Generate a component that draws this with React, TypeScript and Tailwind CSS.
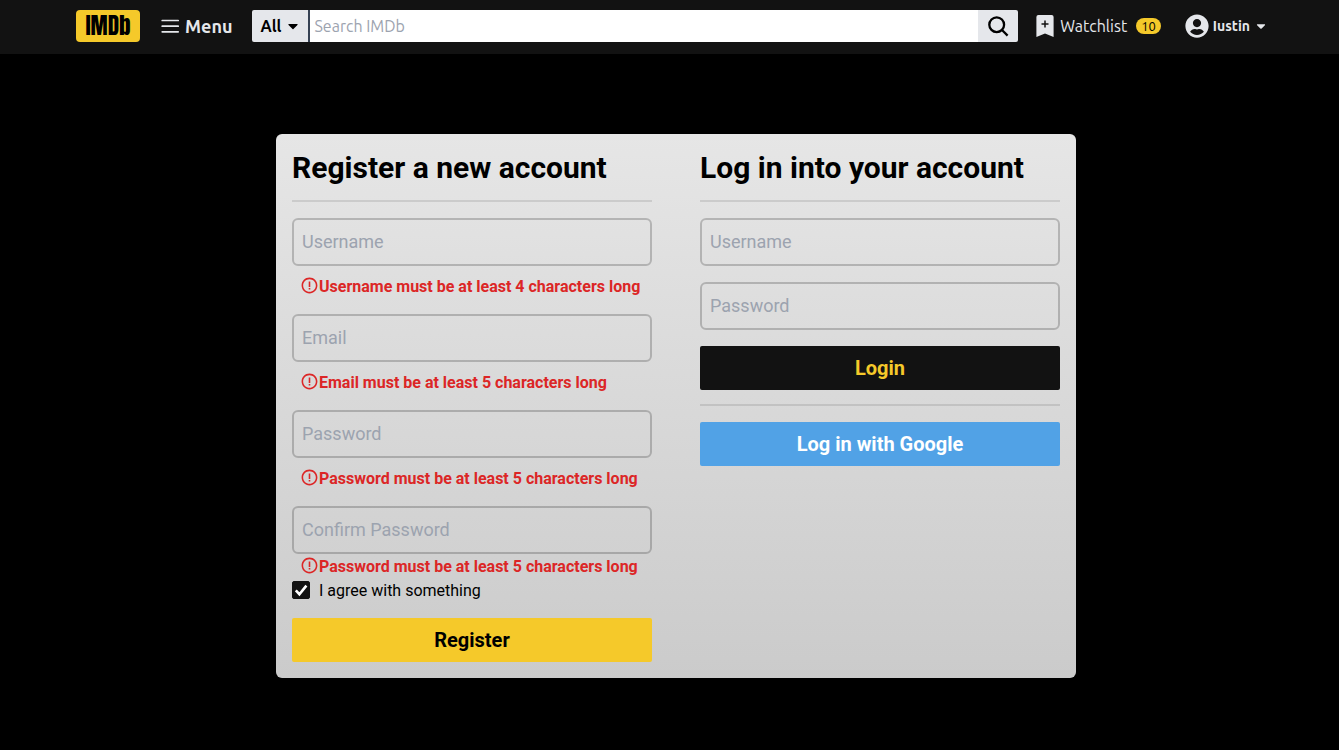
import { useState } from "react";
import { FaCaretDown, FaUserCircle } from "react-icons/fa";
import { BiErrorCircle } from "react-icons/bi";

function MenuIcon() {
  return (
    <svg viewBox="0 0 20 20" className="h-5 w-5" fill="none" stroke="currentColor" strokeWidth="1.7" strokeLinecap="round" aria-hidden="true">
      <path d="M2.2 4.5h16M2.2 10.2h16M2.2 15.8h16" />
    </svg>
  );
}

function SearchIcon() {
  return (
    <svg viewBox="0 0 24 24" className="h-6 w-6" fill="none" stroke="currentColor" strokeWidth="2.3" aria-hidden="true">
      <circle cx="10.7" cy="10.7" r="7.4" />
      <path d="M16 16l5.6 5.6" />
    </svg>
  );
}

function WatchlistIcon() {
  return (
    <svg viewBox="0 0 18 22" className="h-[22px] w-[18px]" aria-hidden="true">
      <path d="M2.4 0h13.2a2 2 0 0 1 2 2v20L9 18.6.4 22V2a2 2 0 0 1 2-2z" fill="currentColor" />
      <path d="M9 5.6v7M5.5 9.1h7" stroke="#121212" strokeWidth="1.5" fill="none" />
    </svg>
  );
}

function Navbar() {
  return (
    <header className="bg-[#121212] font-['Ubuntu','Noto_Sans',sans-serif] text-gray-200">
      <nav className="mx-auto flex h-[54px] max-w-[1199px] items-center pt-[10px] pb-3 pr-px pl-[6px]">
        <a href="#home" aria-label="IMDb home" className="flex h-8 w-16 shrink-0 items-center justify-center rounded bg-[#f5c92a] font-['Impact','Anton','Roboto_Condensed','Open_Sans_Condensed','Ubuntu_Condensed',sans-serif] text-[23px] font-normal text-black">
          IMDb
        </a>
        <button type="button" className="ml-5 flex shrink-0 items-center gap-[5px] text-lg font-bold">
          <MenuIcon />
          Menu
        </button>
        <form className="ml-5 flex h-8 min-w-0 grow overflow-hidden rounded-xs" onSubmit={(e) => e.preventDefault()}>
          <button type="button" className="flex w-[58px] shrink-0 items-center gap-1 border-r-2 border-gray-700 bg-gray-200 pl-2 font-bold text-black">
            All
            <FaCaretDown size={16} />
          </button>
          <input type="search" aria-label="Search IMDb" placeholder="Search IMDb" className="min-w-0 grow bg-white px-1 text-black placeholder:text-[#9ca3af] focus:outline-none" />
          <button type="submit" aria-label="Search" className="flex w-10 shrink-0 items-center justify-center bg-gray-200 text-black">
            <SearchIcon />
          </button>
        </form>
        <a href="#watchlist" className="ml-[18px] flex shrink-0 items-center">
          <WatchlistIcon />
          <span className="ml-[6px]">Watchlist</span>
          <span className="ml-[9px] rounded-full bg-[#f5c92a] px-[5px] text-[13px] leading-4 text-black">10</span>
        </a>
        <button type="button" className="ml-6 flex shrink-0 items-center gap-1 text-sm font-bold">
          <FaUserCircle size={24} />
          Iustin
          <FaCaretDown size={14} />
        </button>
      </nav>
    </header>
  );
}

type FieldProps = { id: string; label: string; type?: string; error?: string; tight?: boolean };

function Field({ id, label, type = "text", error, tight }: FieldProps) {
  return (
    <div className={tight ? "flex flex-col" : "flex flex-col gap-2"}>
      <input
        id={id}
        type={type}
        aria-label={label}
        placeholder={label}
        className="h-12 w-full rounded-md border-2 border-black/20 px-2 pb-0.5 text-lg placeholder:text-[#9ca3af] focus:border-black/50 focus:outline-none"
      />
      {error && (
        <p className="flex h-6 items-start pl-2 leading-[26px] font-bold text-[#dc2626]">
          <BiErrorCircle size={19} className="mt-0.5 shrink-0" />
          {error}
        </p>
      )}
    </div>
  );
}

function RegisterForm() {
  const [agreed, setAgreed] = useState(true);
  return (
    <form className="min-w-0 flex-1" onSubmit={(e) => e.preventDefault()}>
      <h2 className="border-b-2 border-black/10 pb-[14px] text-3xl font-bold">Register a new account</h2>
      <div className="mt-4 flex flex-col gap-4">
        <Field id="register-username" label="Username" error="Username must be at least 4 characters long" />
        <Field id="register-email" label="Email" type="email" error="Email must be at least 5 characters long" />
        <Field id="register-password" label="Password" type="password" error="Password must be at least 5 characters long" />
        <Field id="register-confirm" label="Confirm Password" type="password" error="Password must be at least 5 characters long" tight />
      </div>
      <label className="flex h-6 items-start gap-[9px] leading-[26px]">
        <span className="mt-[3px] grid h-[18px] w-[18px] shrink-0">
          <input
            type="checkbox"
            checked={agreed}
            onChange={(e) => setAgreed(e.target.checked)}
            className="peer col-start-1 row-start-1 h-full w-full appearance-none rounded-xs border border-[#121212] checked:bg-[#121212]"
          />
          <svg viewBox="0 0 18 18" className="pointer-events-none col-start-1 row-start-1 hidden h-full w-full text-white peer-checked:block" fill="none" stroke="currentColor" strokeWidth="2.6" aria-hidden="true">
            <path d="M3.8 9.4l3.6 3.8 7-8.6" />
          </svg>
        </span>
        I agree with something
      </label>
      <button type="submit" className="mt-4 h-11 w-full rounded-xs bg-[#f5c92a] text-xl font-bold text-black">
        Register
      </button>
    </form>
  );
}

function LoginForm() {
  return (
    <form className="min-w-0 flex-1" onSubmit={(e) => e.preventDefault()}>
      <h2 className="border-b-2 border-black/10 pb-[14px] text-3xl font-bold">Log in into your account</h2>
      <div className="mt-4 flex flex-col gap-4">
        <Field id="login-username" label="Username" />
        <Field id="login-password" label="Password" type="password" />
        <button type="submit" className="h-11 w-full rounded-xs bg-[#121212] text-xl font-bold text-[#f5c92a]">
          Login
        </button>
      </div>
      <hr className="mt-[14px] mb-4 border-t-2 border-black/10" />
      <button type="button" className="h-11 w-full rounded-xs bg-[#51a2e6] text-xl font-bold text-white">
        Log in with Google
      </button>
    </form>
  );
}

export default function App() {
  return (
    <div className="min-h-screen bg-black font-['Roboto',sans-serif]">
      <Navbar />
      <main className="flex justify-center pt-20 pb-[72px] pl-[13px]">
        <div className="flex w-full max-w-[800px] gap-12 rounded-md bg-linear-to-b from-[#e6e6e6] to-[#cbcbcb] p-4 text-black">
          <RegisterForm />
          <LoginForm />
        </div>
      </main>
    </div>
  );
}
